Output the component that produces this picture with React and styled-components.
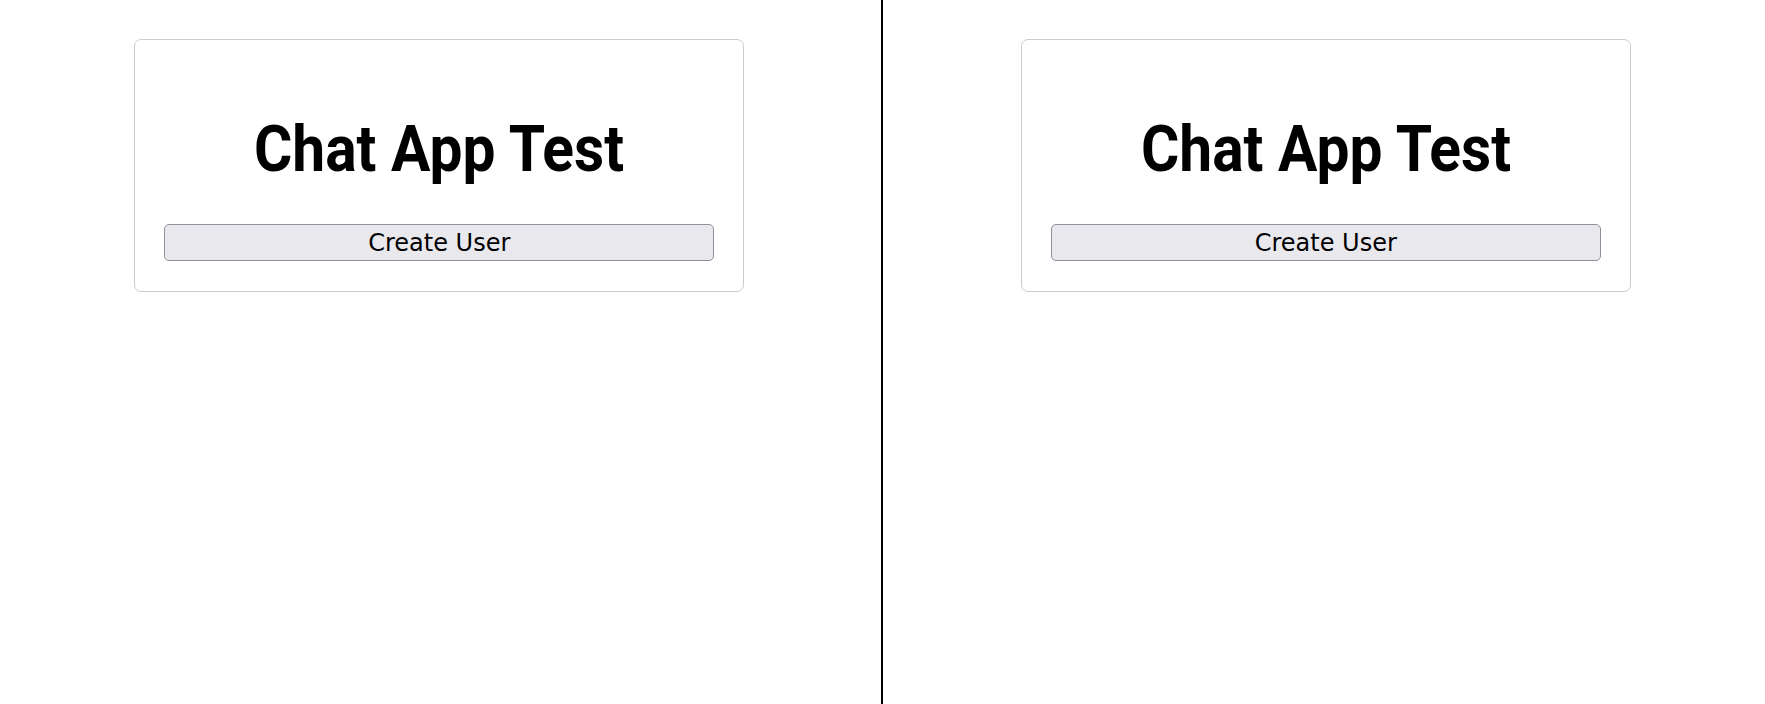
import React from 'react'
import styled, { createGlobalStyle } from 'styled-components'

const GlobalStyle = createGlobalStyle`
  html, body {
    margin: 0;
    padding: 0;
    background: #fff;
  }
  body {
    font-family: Roboto, "Liberation Sans", sans-serif;
  }
`;

const Split = styled.div`
  display: flex;
  height: 100vh;
`;

const Pane = styled.div`
  flex: 1;
  display: flex;
  justify-content: center;
  align-items: flex-start;
`;

const Divider = styled.div`
  width: 2px;
  margin: 0 3.5px 0 2.5px;
  background: #000;
`;

const Card = styled.div`
  box-sizing: border-box;
  width: 610px;
  margin-top: 39px;
  padding: 30px 29px;
  border: 1px solid #cdcdcd;
  border-radius: 7px;
  display: flex;
  flex-direction: column;
`;

const Title = styled.h1`
  margin: 42px 0 37px;
  font-family: Roboto, "Liberation Sans", sans-serif;
  font-size: 64px;
  font-weight: 700;
  line-height: 75px;
  text-align: center;
  color: #000;
  transform: scaleX(0.917);
`;

const Button = styled.button`
  box-sizing: border-box;
  width: 100%;
  height: 37px;
  padding: 0 8px;
  font-family: "DejaVu Sans", sans-serif;
  font-size: 24px;
  color: #000;
  background: #e9e9ed;
  border: 1px solid #8f8f9d;
  border-radius: 5px;
`;

const ChatWindow = () => (
  <Pane>
    <Card>
      <Title>Chat App Test</Title>
      <Button>Create User</Button>
    </Card>
  </Pane>
);

export default function App() {
  return (
    <>
      <GlobalStyle />
      <Split>
        <ChatWindow />
        <Divider />
        <ChatWindow />
      </Split>
    </>
  )
}
